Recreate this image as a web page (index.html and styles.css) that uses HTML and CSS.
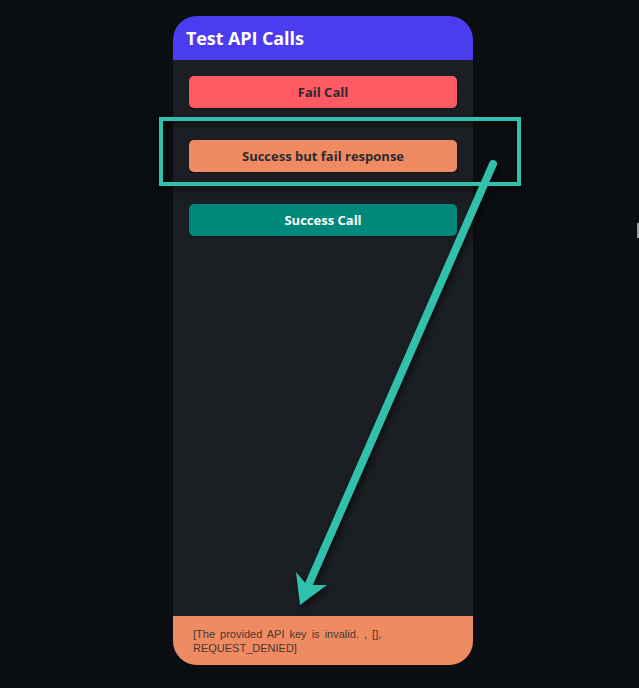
FILE: index.html
```html
<!DOCTYPE html>
<html>
<head>
<meta charset="utf-8">
<link rel="stylesheet" href="styles.css">
</head>
<body>
<div class="phone">
  <header class="header"><h1 class="title">Test API Calls</h1></header>
  <main class="content">
    <button class="btn btn-fail">Fail Call</button>
    <button class="btn btn-warn">Success but fail response</button>
    <button class="btn btn-ok">Success Call</button>
  </main>
  <footer class="result">[The provided API key is invalid. , [], REQUEST_DENIED]</footer>
</div>
<svg class="annot" width="639" height="688" viewBox="0 0 639 688">
  <g class="shadowed">
    <rect x="161" y="119" width="358" height="65" fill="none" stroke="#31c0ab" stroke-width="4"/>
    <line x1="493" y1="164" x2="305" y2="593" stroke="#31c0ab" stroke-width="8" stroke-linecap="round"/>
    <polygon points="300,605 296,572 307,585 327,585" fill="#31c0ab"/>
  </g>
</svg>
<div class="cursor"></div>
</body>
</html>
```
FILE: styles.css
```css
html, body {
  margin: 0;
  padding: 0;
}
body {
  background: #0a0d11;
  width: 639px;
  height: 688px;
  overflow: hidden;
  position: relative;
  padding: 16px 0 0 173px;
  box-sizing: border-box;
  font-family: "Open Sans", "Liberation Sans", sans-serif;
}
.phone {
  width: 300px;
  height: 649px;
  border-radius: 24px;
  overflow: hidden;
  display: flex;
  flex-direction: column;
  background: #1b1e22;
}
.header {
  height: 44px;
  flex: none;
  background: #4c3cf0;
  display: flex;
  align-items: center;
  padding: 0 13px;
}
.title {
  margin: 0;
  color: #ffffff;
  font-size: 18px;
  font-weight: 700;
  letter-spacing: -0.1px;
}
.content {
  flex: 1;
  display: flex;
  flex-direction: column;
  gap: 32px;
  padding: 16px 16px;
}
.btn {
  height: 32px;
  border: none;
  border-radius: 5px;
  font-family: "Open Sans", "Liberation Sans", sans-serif;
  font-size: 13px;
  font-weight: 700;
  color: #2d2a2e;
  box-shadow: 0 1px 2px rgba(0,0,0,0.35);
  padding: 0;
}
.btn-fail { background: #ff5a64; }
.btn-warn { background: #ef8b62; }
.btn-ok { background: #00897b; color: #ffffff; }
.result {
  flex: none;
  height: 49px;
  box-sizing: border-box;
  background: #ef8b62;
  padding: 11px 18px 0 20px;
  font-family: "Liberation Sans", Arial, sans-serif;
  font-size: 11px;
  line-height: 14px;
  word-spacing: 2px;
  color: #4a3730;
}
.annot {
  position: absolute;
  left: 0;
  top: 0;
  pointer-events: none;
}
.shadowed {
  filter: drop-shadow(2px 3px 3px rgba(0,0,0,0.6));
}
.cursor {
  position: absolute;
  left: 637px;
  top: 223px;
  width: 2px;
  height: 15px;
  background: #9a9ea3;
}
```
